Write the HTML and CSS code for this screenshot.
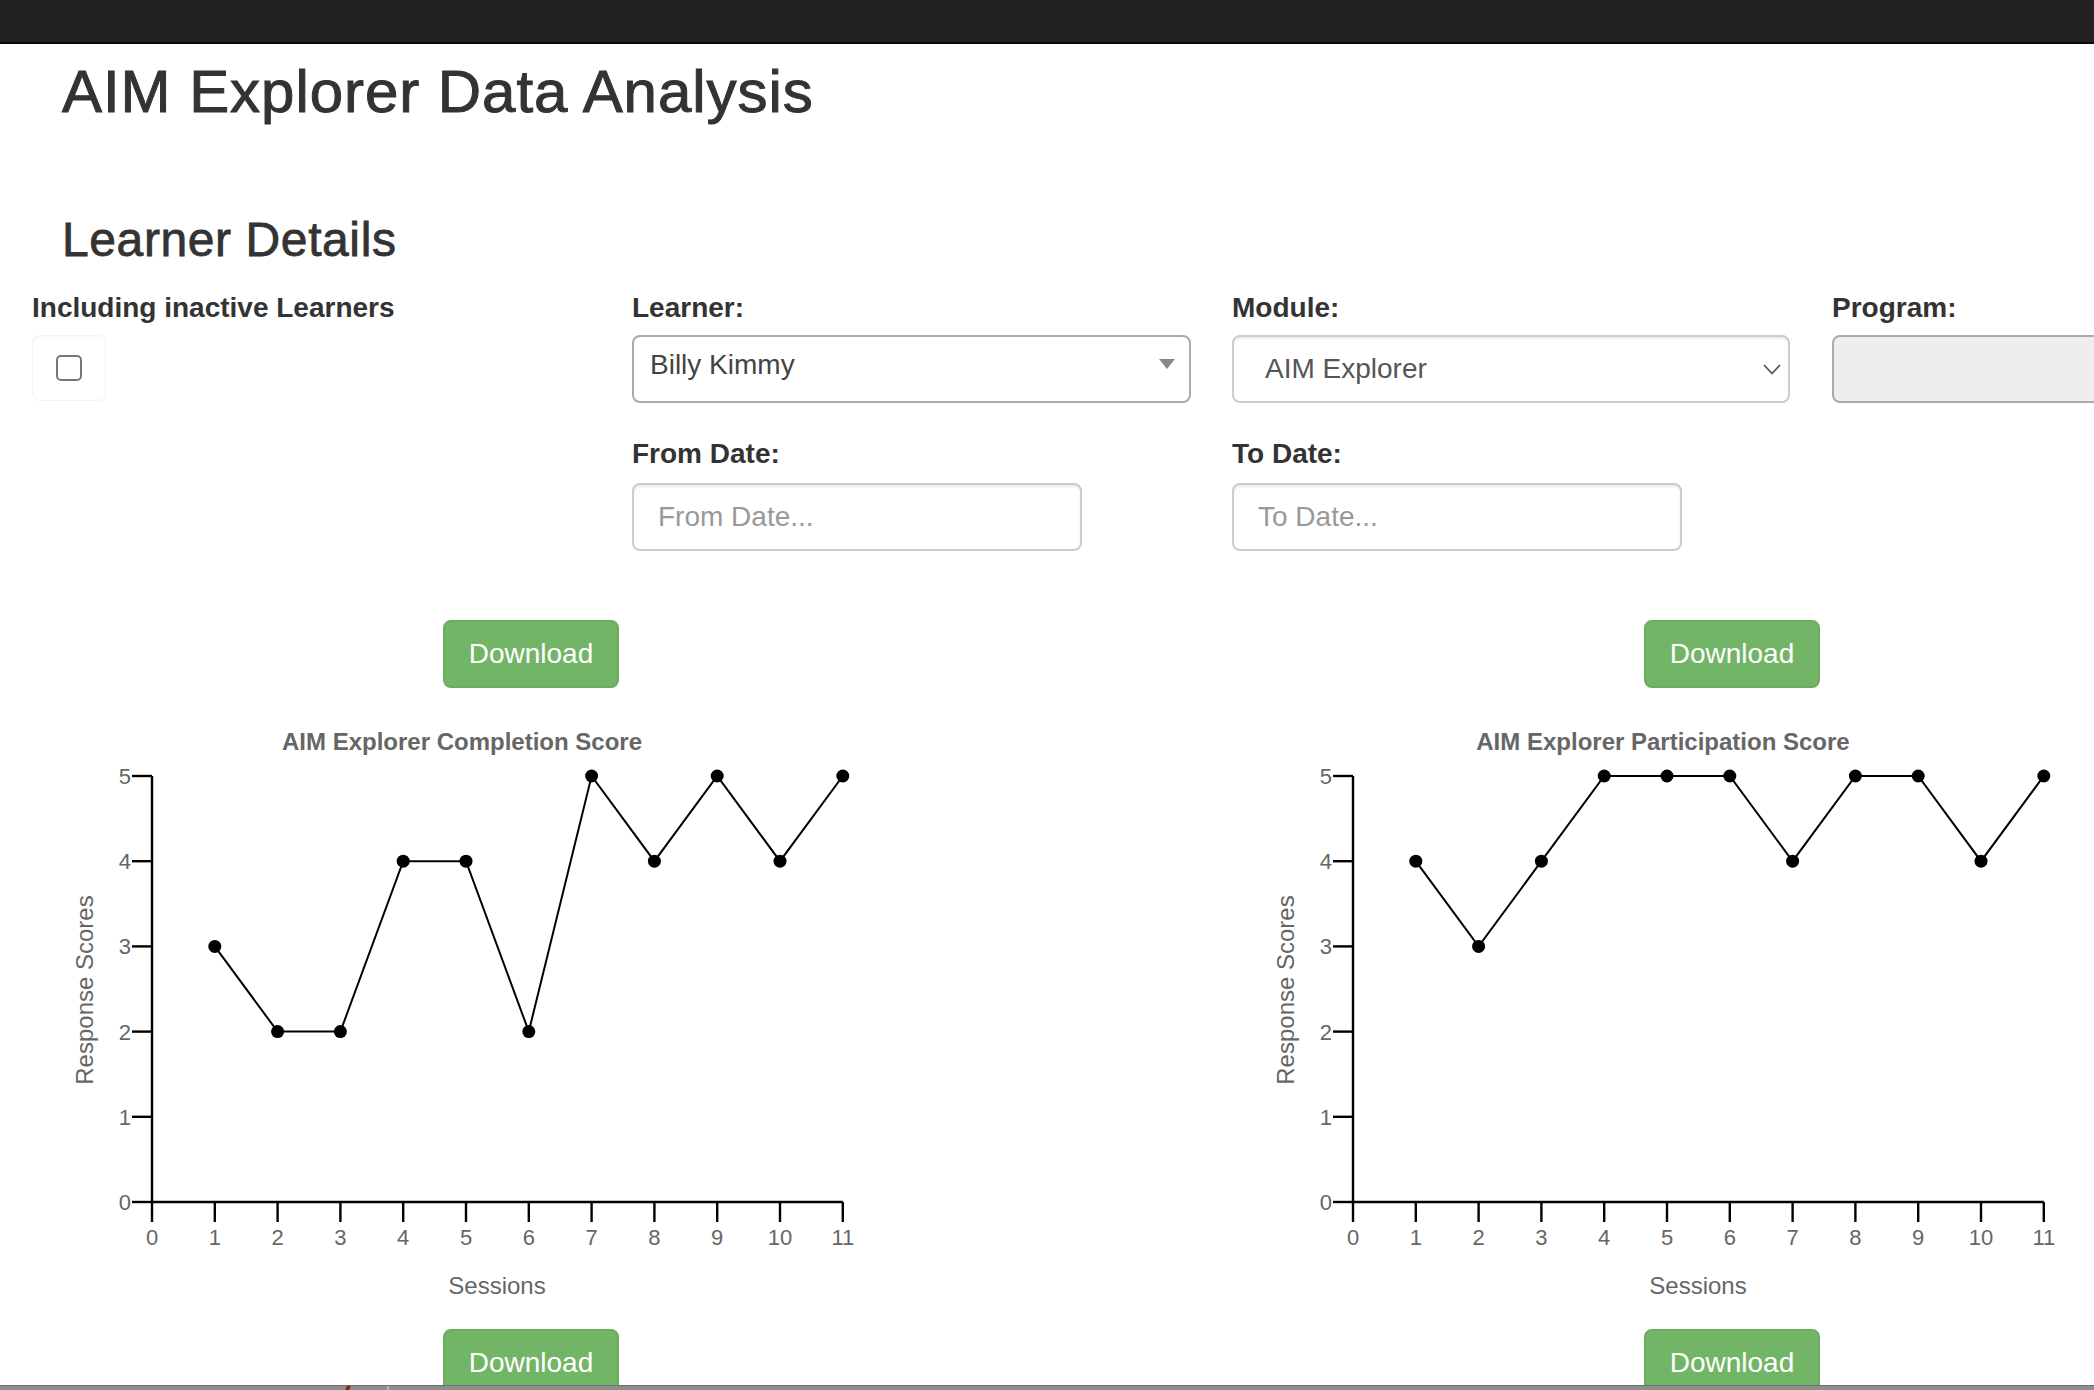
FILE: index.html
```html
<!DOCTYPE html>
<html lang="en">
<head>
  <meta charset="UTF-8" />
  <meta name="viewport" content="width=device-width, initial-scale=1.0"/>
  <title>AIM Explorer Data Analysis</title>
  <link rel="stylesheet" href="styles.css">
</head>
<body>

  <nav class="navbar"></nav>

  <div class="page-head">
    <h1 class="page-title">AIM Explorer Data Analysis</h1>
    <h3 class="section-title">Learner Details</h3>
  </div>

  <div class="form-row">
    <div class="form-col">
      <label>Including inactive Learners</label>
      <div class="check-wrap"><input type="checkbox" class="check" /></div>
    </div>
    <div class="form-col">
      <label>Learner:</label>
      <div class="select2">
        <span>Billy Kimmy</span>
        <b class="select2-arrow"></b>
      </div>
    </div>
    <div class="form-col">
      <label>Module:</label>
      <div class="select-box">
        <span>AIM Explorer</span>
        <svg class="chevron" width="18" height="11" viewBox="0 0 18 11"><path d="M1 1 L9 9.5 L17 1" fill="none" stroke="#555" stroke-width="1.8"/></svg>
      </div>
    </div>
    <div class="form-col">
      <label>Program:</label>
      <div class="program-box"></div>
    </div>
  </div>

  <div class="form-row dates">
    <div class="form-col"></div>
    <div class="form-col">
      <label>From Date:</label>
      <input type="text" class="date-input" placeholder="From Date..." />
    </div>
    <div class="form-col">
      <label>To Date:</label>
      <input type="text" class="date-input" placeholder="To Date..." />
    </div>
  </div>

  <div class="charts">
    <div class="chart-col">
      <div class="chart-actions"><button class="btn-success">Download</button></div>
      <svg class="chart" id="completion" width="860" height="641"></svg>
      <div class="chart-actions"><button class="btn-success">Download</button></div>
    </div>
    <div class="chart-col">
      <div class="chart-actions"><button class="btn-success">Download</button></div>
      <svg class="chart" id="participation" width="860" height="641"></svg>
      <div class="chart-actions"><button class="btn-success">Download</button></div>
    </div>
  </div>

  <div class="status-bar"><span class="status-mark"></span><span class="status-sep"></span></div>

  <script>
    const NS = "http://www.w3.org/2000/svg";

    function el(name, attrs, text) {
      const e = document.createElementNS(NS, name);
      for (const k in attrs) e.setAttribute(k, attrs[k]);
      if (text !== undefined) e.textContent = text;
      return e;
    }

    function drawChart(id, title, scores) {
      const svg = document.getElementById(id);
      const x0 = 120, y0 = 514, xu = 62.8, yu = 85.2;

      svg.appendChild(el("text", { x: 430, y: 62, "class": "chart-title" }, title));

      // y axis
      svg.appendChild(el("line", { x1: x0, y1: y0 - 5 * yu, x2: x0, y2: y0, "class": "axis" }));
      for (let i = 0; i <= 5; i++) {
        const y = y0 - i * yu;
        svg.appendChild(el("line", { x1: x0 - 20, y1: y, x2: x0, y2: y, "class": "axis" }));
        svg.appendChild(el("text", { x: x0 - 21, y: y + 8, "class": "tick", "text-anchor": "end" }, i));
      }

      // x axis
      svg.appendChild(el("line", { x1: x0, y1: y0, x2: x0 + 11 * xu, y2: y0, "class": "axis" }));
      for (let i = 0; i <= 11; i++) {
        const x = x0 + i * xu;
        svg.appendChild(el("line", { x1: x, y1: y0, x2: x, y2: y0 + 20, "class": "axis" }));
        svg.appendChild(el("text", { x: x, y: 557, "class": "tick", "text-anchor": "middle" }, i));
      }

      svg.appendChild(el("text", { transform: "translate(61,302) rotate(-90)", "class": "axis-label" }, "Response Scores"));
      svg.appendChild(el("text", { x: 465, y: 606, "class": "axis-label" }, "Sessions"));

      const pts = scores.map((s, i) => (x0 + (i + 1) * xu) + "," + (y0 - s * yu)).join(" ");
      svg.appendChild(el("polyline", { points: pts, "class": "series" }));
      scores.forEach((s, i) => {
        svg.appendChild(el("circle", { cx: x0 + (i + 1) * xu, cy: y0 - s * yu, r: 6.5, "class": "dot" }));
      });
    }

    drawChart("completion", "AIM Explorer Completion Score", [3, 2, 2, 4, 4, 2, 5, 4, 5, 4, 5]);
    drawChart("participation", "AIM Explorer Participation Score", [4, 3, 4, 5, 5, 5, 4, 5, 5, 4, 5]);
  </script>

</body>
</html>
```

FILE: styles.css
```css
html, body {
  overflow: hidden;
}
body {
  margin: 0;
  font-family: "Liberation Sans", Arial, sans-serif;
  font-size: 28px;
  color: #333;
  background: #fff;
}
.navbar {
  height: 42px;
  background: #222;
  border-bottom: 2px solid #0a0a0a;
}
.page-head {
  padding-left: 62px;
}
.page-title {
  margin: 15px 0 0;
  font-size: 60px;
  line-height: 66px;
  font-weight: 500;
  letter-spacing: 0.95px;
  -webkit-text-stroke: 1px #333;
}
.section-title {
  margin: 88px 0 0;
  font-size: 48px;
  line-height: 53px;
  font-weight: 500;
  letter-spacing: 0.6px;
  -webkit-text-stroke: 0.8px #333;
}
.form-row {
  display: flex;
  margin-top: 22px;
  padding-left: 32px;
}
.form-row.dates {
  margin-top: 31px;
}
.form-col {
  flex: 0 0 600px;
  display: flex;
  flex-direction: column;
  align-items: flex-start;
}
label {
  display: block;
  font-weight: bold;
  line-height: 40px;
  margin-bottom: 7px;
  white-space: nowrap;
}
.check-wrap {
  width: 72px;
  height: 64px;
  border: 1px solid #f3f3f3;
  border-radius: 8px;
  box-shadow: inset 0 2px 2px rgba(0, 0, 0, 0.02);
  display: flex;
  align-items: center;
  justify-content: center;
}
.check {
  appearance: none;
  -webkit-appearance: none;
  margin: 0;
  width: 26px;
  height: 26px;
  border: 2px solid #777;
  border-radius: 5px;
  background: #fff;
}
.select2 {
  box-sizing: border-box;
  width: 559px;
  height: 68px;
  border: 2px solid #aaa;
  border-radius: 8px;
  padding: 0 14px 8px 16px;
  display: flex;
  align-items: center;
  justify-content: space-between;
  color: #444;
}
.select2-arrow {
  width: 0;
  height: 0;
  border-top: 10px solid #888;
  border-left: 8px solid transparent;
  border-right: 8px solid transparent;
  margin-top: -2px;
}
.select-box {
  box-sizing: border-box;
  width: 558px;
  height: 68px;
  border: 2px solid #ccc;
  border-radius: 8px;
  box-shadow: inset 0 2px 2px rgba(0, 0, 0, 0.075);
  padding: 0 7px 0 31px;
  display: flex;
  align-items: center;
  justify-content: space-between;
  color: #555;
}
.program-box {
  box-sizing: border-box;
  width: 558px;
  height: 68px;
  background: #eee;
  border: 2px solid #aaa;
  border-radius: 8px;
}
.date-input {
  box-sizing: border-box;
  width: 450px;
  height: 68px;
  margin: 2px 0 0;
  padding: 0 24px;
  border: 2px solid #ccc;
  border-radius: 8px;
  box-shadow: inset 0 2px 2px rgba(0, 0, 0, 0.075);
  font-family: inherit;
  font-size: 28px;
  color: #555;
}
.date-input::placeholder {
  color: #999;
}
.charts {
  display: flex;
  margin-top: 69px;
  padding-left: 32px;
}
.chart-col {
  flex: 0 0 1201px;
}
.chart-actions {
  width: 998px;
  display: flex;
  justify-content: center;
}
.btn-success {
  font-family: inherit;
  font-size: 28px;
  line-height: 40px;
  padding: 12px 24px;
  color: #fff;
  background: #73b566;
  border: 2px solid #6aae5d;
  border-radius: 8px;
  cursor: pointer;
}
.chart {
  display: block;
}
.chart-title {
  font-family: "Liberation Sans", Arial, sans-serif;
  font-size: 24px;
  font-weight: bold;
  fill: #666;
  text-anchor: middle;
}
.axis {
  stroke: #000;
  stroke-width: 2.4;
}
.tick {
  font-family: "Liberation Sans", Arial, sans-serif;
  font-size: 22px;
  fill: #666;
}
.axis-label {
  font-family: "Liberation Sans", Arial, sans-serif;
  font-size: 24px;
  fill: #666;
  text-anchor: middle;
}
.series {
  fill: none;
  stroke: #000;
  stroke-width: 2;
}
.dot {
  fill: #000;
}
.status-bar {
  position: fixed;
  left: 0;
  right: 0;
  bottom: 0;
  height: 4px;
  background: #8d8d8d;
  border-top: 1px solid #6f6f6f;
  display: flex;
}
.status-mark {
  width: 4px;
  margin-left: 346px;
  background: #7a2a18;
  transform: skewX(-20deg);
}
.status-sep {
  width: 2px;
  margin-left: 37px;
  background: #b5b5b5;
}
```
